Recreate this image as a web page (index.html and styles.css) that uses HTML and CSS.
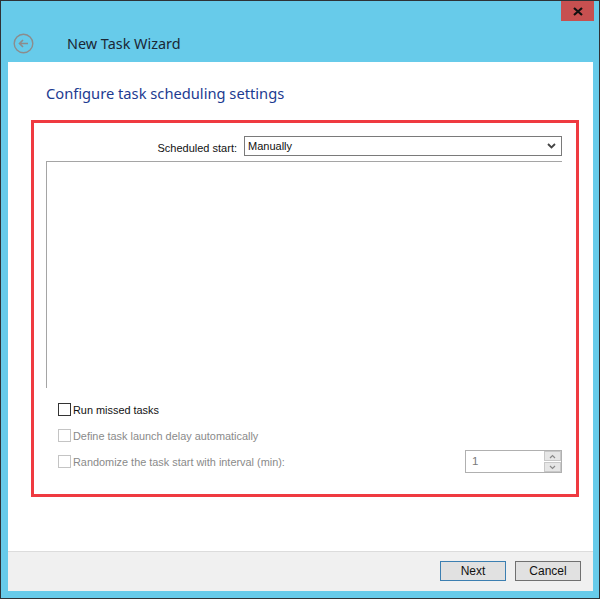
FILE: index.html
```html
<!DOCTYPE html>
<html lang="en">
<head>
    <meta charset="UTF-8">
    <title>New Task Wizard</title>
    <link rel="stylesheet" href="styles.css">
</head>
<body>

    <div class="window">
        <div class="caption-bar">
            <div class="close-btn">
                <svg width="10" height="9" viewBox="0 0 10 9">
                    <path d="M1 1 L9 8 M9 1 L1 8" stroke="#111" stroke-width="2.2"/>
                </svg>
            </div>
        </div>
        <div class="wizard-header">
            <svg class="back-icon" width="21" height="21" viewBox="0 0 21 21">
                <circle cx="10.5" cy="10.5" r="9.3" fill="none" stroke="#8c8c8c" stroke-width="1.4"/>
                <path d="M15 10.5 H6.5 M10 7 L6.5 10.5 L10 14" fill="none" stroke="#8c8c8c" stroke-width="1.6"/>
            </svg>
            <span class="wizard-title">New Task Wizard</span>
        </div>

        <div class="client">
            <h1 class="page-heading">Configure task scheduling settings</h1>

            <div class="frame">
                <div class="start-row">
                    <label for="start">Scheduled start:</label>
                    <div class="combo" id="start">
                        <span>Manually</span>
                        <svg width="9" height="6" viewBox="0 0 9 6">
                            <path d="M1 1 L4.5 4.5 L8 1" fill="none" stroke="#444" stroke-width="1.8"/>
                        </svg>
                    </div>
                </div>

                <div class="schedule-panel"></div>

                <div class="options">
                    <div class="check-row">
                        <span class="check"></span>
                        <span>Run missed tasks</span>
                    </div>
                    <div class="check-row disabled">
                        <span class="check"></span>
                        <span>Define task launch delay automatically</span>
                    </div>
                    <div class="check-row disabled">
                        <span class="check"></span>
                        <span>Randomize the task start with interval (min):</span>
                        <div class="spin">
                            <span class="spin-value">1</span>
                            <div class="spin-btns">
                                <div class="spin-btn">
                                    <svg width="7" height="5" viewBox="0 0 7 5"><path d="M1 4 L3.5 1.5 L6 4" fill="none" stroke="#8a8a8a" stroke-width="1.2"/></svg>
                                </div>
                                <div class="spin-btn">
                                    <svg width="7" height="5" viewBox="0 0 7 5"><path d="M1 1 L3.5 3.5 L6 1" fill="none" stroke="#8a8a8a" stroke-width="1.2"/></svg>
                                </div>
                            </div>
                        </div>
                    </div>
                </div>
            </div>

            <div class="footer">
                <button class="btn default">Next</button>
                <button class="btn">Cancel</button>
            </div>
        </div>
    </div>

</body>
</html>
```

FILE: styles.css
```css
* {
    box-sizing: border-box;
}
body {
    margin: 0;
    font-family: "Liberation Sans", Arial, sans-serif;
}
.window {
    width: 600px;
    height: 599px;
    background-color: #67cbea;
    border: 1px solid #2e3236;
    padding: 0 6px 7px 7px;
    display: flex;
    flex-direction: column;
}
.caption-bar {
    height: 20px;
    display: flex;
    justify-content: flex-end;
}
.close-btn {
    width: 33px;
    height: 20px;
    margin-right: -1px;
    background-color: #c75050;
    display: flex;
    align-items: center;
    justify-content: center;
}
.wizard-header {
    height: 41px;
    display: flex;
    align-items: center;
    padding-left: 5px;
}
.back-icon {
    margin-right: 33px;
    margin-top: 3px;
}
.wizard-title {
    font-family: "Noto Sans", sans-serif;
    font-size: 14.4px;
    color: #1b2735;
    margin-top: 3px;
}
.client {
    flex: 1;
    background-color: #fff;
    display: flex;
    flex-direction: column;
}
.page-heading {
    margin: 21px 0 0 38px;
    font-family: "Noto Sans", sans-serif;
    font-size: 14.7px;
    font-weight: normal;
    line-height: 21px;
    color: #1d3b91;
}
.frame {
    margin: 16px 0 0 23px;
    width: 548px;
    height: 377px;
    border: 3px solid #ef3a40;
    padding: 13px 14px 0 12px;
}
.start-row {
    display: flex;
    justify-content: flex-end;
    align-items: center;
    font-size: 11px;
    color: #111;
}
.start-row label {
    margin-right: 7px;
    margin-top: 4px;
}
.combo {
    width: 318px;
    height: 20px;
    border: 1px solid #7a7a7a;
    display: flex;
    justify-content: space-between;
    align-items: center;
    padding: 0 5px 0 3px;
}
.schedule-panel {
    margin-top: 5px;
    height: 227px;
    border-top: 1px solid #a5a5a5;
    border-left: 1px solid #a5a5a5;
}
.options {
    padding: 15px 0 0 12px;
    display: flex;
    flex-direction: column;
    gap: 13px;
}
.check-row {
    height: 13px;
    display: flex;
    align-items: center;
    font-size: 10.9px;
    color: #111;
}
.check {
    width: 13px;
    height: 13px;
    border: 1px solid #333;
    margin-right: 2px;
}
.check-row.disabled {
    color: #8a8a8a;
}
.check-row.disabled .check {
    border-color: #c4c4c4;
}
.spin {
    margin-left: auto;
    width: 97px;
    height: 23px;
    border: 1px solid #b0b0b0;
    display: flex;
    justify-content: space-between;
    font-size: 11.5px;
    color: #7a7a7a;
}
.spin-value {
    padding: 4px 0 0 6px;
}
.spin-btns {
    width: 17px;
    display: flex;
    flex-direction: column;
    gap: 1px;
}
.spin-btn {
    flex: 1;
    background-color: #e6e6e6;
    border: 1px solid #c8c8c8;
    display: flex;
    align-items: center;
    justify-content: center;
}
.footer {
    margin-top: auto;
    height: 40px;
    background-color: #f0f0f0;
    border-top: 1px solid #dcdcdc;
    display: flex;
    justify-content: flex-end;
    align-items: center;
    gap: 9px;
    padding: 0 12px 1px 0;
}
.btn {
    width: 66px;
    height: 20px;
    font-family: "Liberation Sans", Arial, sans-serif;
    font-size: 12px;
    color: #111;
    background-color: #e1e1e1;
    border: 1px solid #707070;
    padding: 0;
}
.btn.default {
    border-color: #3c7fb1;
}
```
